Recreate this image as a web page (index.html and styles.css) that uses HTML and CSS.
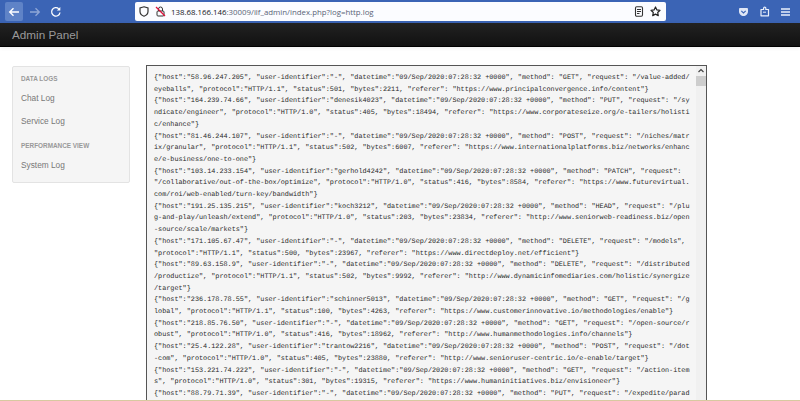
FILE: index.html
```html
<!DOCTYPE html>
<html lang="en">
<head>
<meta charset="utf-8">
<title>Admin Panel</title>
<link rel="stylesheet" href="styles.css">
</head>
<body>
<div class="page">
  <header class="toolbar">
    <div class="nav-buttons">
      <span class="tool-btn active"><svg width="12" height="12" viewBox="0 0 12 12"><path d="M11 6H2M5.500 2.200 1.700 6l3.800 3.800" fill="none" stroke="#fff" stroke-width="1.400"/></svg></span>
      <span class="tool-btn"><svg width="12" height="12" viewBox="0 0 12 12"><path d="M1 6h9M6.500 2.200 10.300 6 6.500 9.800" fill="none" stroke="#8fa6d6" stroke-width="1.300"/></svg></span>
      <span class="tool-btn"><svg width="12" height="12" viewBox="0 0 12 12"><path d="M10 6.500A4.200 4.200 0 1 1 8.700 2.800" fill="none" stroke="#fff" stroke-width="1.300"/><path d="M10.300 1v3.500H6.800z" fill="#fff"/></svg></span>
    </div>
    <div class="urlbar">
      <svg class="shield" width="10" height="11" viewBox="0 0 10 11"><path d="M5 .8 9 2v3.500C9 8 7 9.500 5 10.200 3 9.500 1 8 1 5.500V2z" fill="none" stroke="#333" stroke-width="1.200"/></svg>
      <svg class="lock" width="11" height="11" viewBox="0 0 11 11"><rect x="2" y="5" width="7" height="5" rx="1" fill="none" stroke="#333"/><path d="M3.500 5V3a2 2 0 0 1 4 0v2" fill="none" stroke="#333"/><path d="M1 1l9 9" stroke="#e0103a" stroke-width="1.200"/></svg>
      <span class="url"><b>138.68.166.146</b>:30009/ilf_admin/index.php?log=http.log</span>
      <svg class="reader" width="10" height="11" viewBox="0 0 10 11"><rect x="1.500" y=".8" width="7" height="9.400" rx="1.200" fill="none" stroke="#333" stroke-width="1.100"/><path d="M3 3.500h4M3 5.500h4M3 7.500h2.500" stroke="#333"/></svg>
      <svg class="star" width="11" height="11" viewBox="0 0 11 11"><path d="m5.500 1 1.400 2.900 3.100.4-2.300 2.200.6 3.100-2.800-1.500-2.800 1.500.6-3.100L1 4.300l3.100-.4z" fill="none" stroke="#222" stroke-width="1.200" stroke-linejoin="round"/></svg>
    </div>
    <div class="tool-icons">
      <svg width="11" height="10" viewBox="0 0 11 10"><path d="M1 2.200C1 1.500 1.500 1 2.200 1h6.600C9.500 1 10 1.500 10 2.200V4.500C10 7 7.800 9 5.500 9S1 7 1 4.500z" fill="#dfe6f5"/><path d="M3.300 3.800 5.500 6l2.200-2.200" fill="none" stroke="#3b64b5" stroke-width="1.100"/></svg>
      <svg width="10" height="11" viewBox="0 0 10 11"><path d="M1 3.500h2.600V2.200a1.100 1.100 0 0 1 2.200 0v1.300H8.500v6.300H1z" fill="none" stroke="#eaf0fb" stroke-width="1.200" stroke-linejoin="round"/><path d="M3 6.200h3" stroke="#eaf0fb"/></svg>
      <svg width="9" height="8" viewBox="0 0 9 8"><path d="M0 1h9M0 4h9M0 7h9" stroke="#eaf0fb" stroke-width="1.300"/></svg>
    </div>
  </header>
  <nav class="navbar"><span class="brand">Admin Panel</span></nav>
  <main class="main">
    <aside class="sidebar">
      <h2 class="side-head">DATA LOGS</h2>
      <a class="side-link">Chat Log</a>
      <a class="side-link">Service Log</a>
      <h2 class="side-head second">PERFORMANCE VIEW</h2>
      <a class="side-link">System Log</a>
    </aside>
    <section class="logbox">
      <pre class="logtext">{"host":"58.96.247.205", "user-identifier":"-", "datetime":"09/Sep/2020:07:28:32 +0000", "method": "GET", "request": "/value-added/eyeballs", "protocol":"HTTP/1.1", "status":501, "bytes":2211, "referer": "https://www.principalconvergence.info/content"}
{"host":"164.239.74.66", "user-identifier":"denesik4023", "datetime":"09/Sep/2020:07:28:32 +0000", "method": "PUT", "request": "/syndicate/engineer", "protocol":"HTTP/1.0", "status":405, "bytes":18494, "referer": "https://www.corporateseize.org/e-tailers/holistic/enhance"}
{"host":"81.46.244.107", "user-identifier":"-", "datetime":"09/Sep/2020:07:28:32 +0000", "method": "POST", "request": "/niches/matrix/granular", "protocol":"HTTP/1.1", "status":502, "bytes":6007, "referer": "https://www.internationalplatforms.biz/networks/enhance/e-business/one-to-one"}
{"host":"103.14.233.154", "user-identifier":"gerhold4242", "datetime":"09/Sep/2020:07:28:32 +0000", "method": "PATCH", "request": "/collaborative/out-of-the-box/optimize", "protocol":"HTTP/1.0", "status":416, "bytes":8584, "referer": "https://www.futurevirtual.com/roi/web-enabled/turn-key/bandwidth"}
{"host":"191.25.135.215", "user-identifier":"koch3212", "datetime":"09/Sep/2020:07:28:32 +0000", "method": "HEAD", "request": "/plug-and-play/unleash/extend", "protocol":"HTTP/1.0", "status":203, "bytes":23834, "referer": "http://www.seniorweb-readiness.biz/open-source/scale/markets"}
{"host":"171.105.67.47", "user-identifier":"-", "datetime":"09/Sep/2020:07:28:32 +0000", "method": "DELETE", "request": "/models", "protocol":"HTTP/1.1", "status":500, "bytes":23967, "referer": "https://www.directdeploy.net/efficient"}
{"host":"89.63.158.9", "user-identifier":"-", "datetime":"09/Sep/2020:07:28:32 +0000", "method": "DELETE", "request": "/distributed<wbr>/productize", "protocol":"HTTP/1.1", "status":502, "bytes":9992, "referer": "http://www.dynamicinfomediaries.com/holistic/synergize<wbr>/target"}
{"host":"236.178.78.55", "user-identifier":"schinner5013", "datetime":"09/Sep/2020:07:28:32 +0000", "method": "GET", "request": "/global", "protocol":"HTTP/1.1", "status":100, "bytes":4263, "referer": "https://www.customerinnovative.io/methodologies/enable"}
{"host":"218.85.76.50", "user-identifier":"-", "datetime":"09/Sep/2020:07:28:32 +0000", "method": "GET", "request": "/open-source/robust", "protocol":"HTTP/1.0", "status":416, "bytes":18962, "referer": "http://www.humanmethodologies.info/channels"}
{"host":"25.4.122.28", "user-identifier":"trantow2216", "datetime":"09/Sep/2020:07:28:32 +0000", "method": "POST", "request": "/dot-com", "protocol":"HTTP/1.0", "status":405, "bytes":23880, "referer": "http://www.senioruser-centric.io/e-enable/target"}
{"host":"153.221.74.222", "user-identifier":"-", "datetime":"09/Sep/2020:07:28:32 +0000", "method": "GET", "request": "/action-items", "protocol":"HTTP/1.0", "status":301, "bytes":19315, "referer": "https://www.humaninitiatives.biz/envisioneer"}
{"host":"88.79.71.39", "user-identifier":"-", "datetime":"09/Sep/2020:07:28:32 +0000", "method": "PUT", "request": "/expedite/parad</pre>
      <div class="scrollbar">
        <svg class="scroll-up" width="10" height="10" viewBox="0 0 10 10"><path d="M2.500 6 5 3.500 7.500 6" fill="none" stroke="#444" stroke-width="1.200"/></svg>
        <div class="scroll-thumb"></div>
      </div>
    </section>
  </main>
  <div class="edge"></div>
</div>
</body>
</html>
```
FILE: styles.css
```css
* { box-sizing: border-box; }
html, body { margin: 0; padding: 0; background: #fff; }
.page {
  width: 800px;
  height: 401px;
  display: flex;
  flex-direction: column;
  overflow: hidden;
  font-family: "Liberation Sans", Arial, sans-serif;
}
.toolbar {
  height: 23px;
  flex: none;
  background: #3b64b5;
  display: flex;
  align-items: center;
  padding: 1px 0 1px 5px;
}
.nav-buttons { display: flex; width: 130px; gap: 3px; }
.tool-btn {
  width: 18px;
  height: 19px;
  display: flex;
  align-items: center;
  justify-content: center;
  border-radius: 2px;
}
.tool-btn.active { background: #5f83c7; }
.urlbar {
  width: 531px;
  height: 19px;
  background: #fbfcff;
  border-radius: 2px;
  display: flex;
  align-items: center;
  padding: 0 5px 0 4px;
}
.shield { margin-right: 6px; }
.lock { margin-right: 5px; }
.url {
  font-family: "Open Sans", "Noto Sans", sans-serif;
  font-size: 7.850px;
  color: #5a6478;
  flex: 1;
  white-space: nowrap;
}
.url b { font-weight: 400; color: #15181f; }
.reader { margin-right: 6px; }
.tool-icons {
  flex: 1;
  display: flex;
  align-items: center;
  justify-content: flex-end;
  gap: 11px;
  padding-right: 10px;
}
.navbar {
  height: 24px;
  flex: none;
  background: linear-gradient(#222, #111);
  border-bottom: 1px solid #000;
  display: flex;
  align-items: center;
  padding-left: 12px;
  box-shadow: 0 1px 4px rgba(0, 0, 0, .08);
}
.brand { font-size: 11.700px; color: #999; }
.main {
  flex: 1;
  min-height: 0;
  display: flex;
  align-items: flex-start;
  padding: 18px 0 0 12px;
  gap: 16px;
}
.sidebar {
  width: 118px;
  height: 117px;
  flex: none;
  margin-top: 1px;
  background: #f5f5f5;
  border: 1px solid #e3e3e3;
  border-radius: 2px;
  padding: 8px 8px;
  display: flex;
  flex-direction: column;
}
.side-head {
  margin: 0 0 3.500px;
  font-size: 6.400px;
  line-height: 8px;
  font-weight: 700;
  color: #999;
}
.side-head.second { margin-top: 9.500px; }
.side-link {
  font-size: 8.300px;
  line-height: 23px;
  color: #777;
}
.logbox {
  width: 561px;
  height: 340px;
  flex: none;
  background: #f5f5f5;
  border: 1.500px solid #555;
  border-bottom: 0;
  display: flex;
  overflow: hidden;
}
.logtext {
  margin: 0;
  width: 546.500px;
  flex: none;
  padding: 7px 0 0 7px;
  font-family: "Liberation Mono", "DejaVu Sans Mono", monospace;
  font-size: 6.820px;
  line-height: 11.700px;
  color: #2b2b2b;
  white-space: pre-wrap;
  word-break: break-all;
  text-rendering: geometricPrecision;
  overflow: hidden;
}
.scrollbar {
  width: 10px;
  flex: none;
  margin-left: auto;
  background: #f0f0f0;
  display: flex;
  flex-direction: column;
}
.scroll-thumb { height: 10px; background: #cdcdcd; }
.edge { height: 1px; flex: none; background: #d8c9a0; }
```
